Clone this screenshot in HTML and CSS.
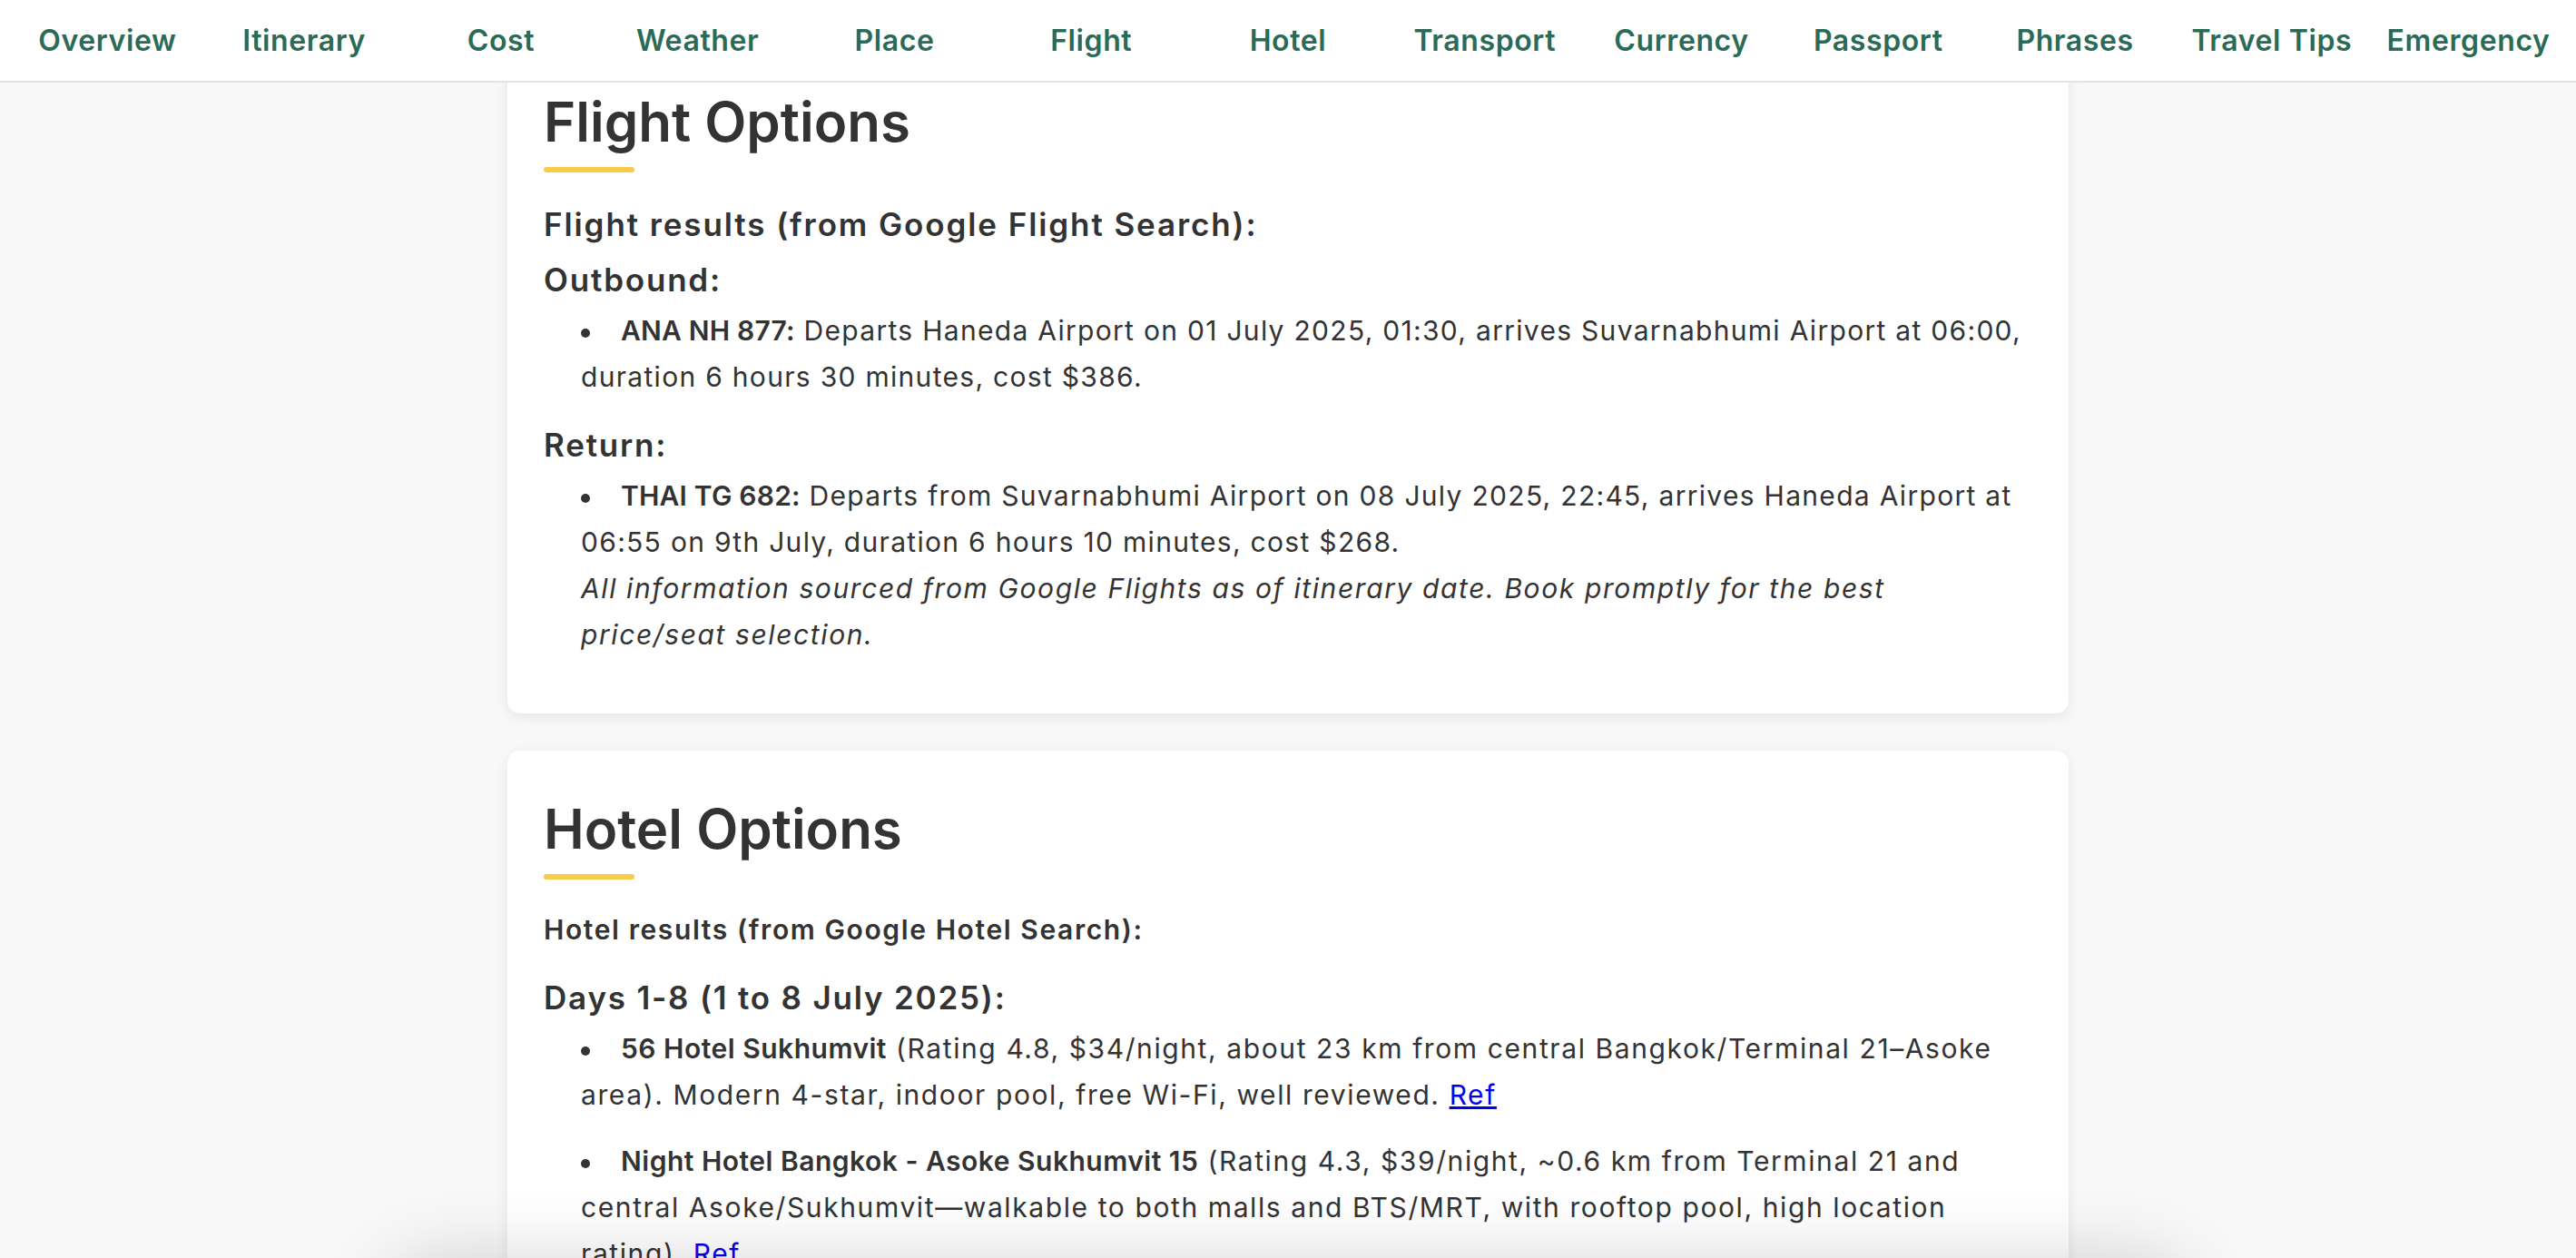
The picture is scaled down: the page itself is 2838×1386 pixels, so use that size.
FILE: index.html
```html
<!DOCTYPE html>
<html lang="en">
<head>
<meta charset="utf-8">
<title>Trip Plan – Flight &amp; Hotel</title>
<link rel="stylesheet" href="styles.css">
</head>
<body>
<nav class="topnav">
  <a class="navlink" href="#overview">Overview</a>
  <a class="navlink" href="#itinerary">Itinerary</a>
  <a class="navlink" href="#cost">Cost</a>
  <a class="navlink" href="#weather">Weather</a>
  <a class="navlink" href="#place">Place</a>
  <a class="navlink" href="#flight">Flight</a>
  <a class="navlink" href="#hotel">Hotel</a>
  <a class="navlink" href="#transport">Transport</a>
  <a class="navlink" href="#currency">Currency</a>
  <a class="navlink" href="#passport">Passport</a>
  <a class="navlink" href="#phrases">Phrases</a>
  <a class="navlink" href="#tips">Travel Tips</a>
  <a class="navlink" href="#emergency">Emergency</a>
</nav>
<main class="content">
  <section class="card" id="flight">
    <h2 class="card-title">Flight Options</h2>
    <p class="lead">Flight results (from Google Flight Search):</p>
    <h3 class="sub">Outbound:</h3>
    <ul class="items">
      <li><strong>ANA NH 877:</strong> Departs Haneda Airport on 01 July 2025, 01:30, arrives Suvarnabhumi Airport at 06:00, duration 6 hours 30 minutes, cost $386.</li>
    </ul>
    <h3 class="sub">Return:</h3>
    <ul class="items">
      <li><strong>THAI TG 682:</strong> Departs from Suvarnabhumi Airport on 08 July 2025, 22:45, arrives Haneda Airport at 06:55 on 9th July, duration 6 hours 10 minutes, cost $268.<br><em>All information sourced from Google Flights as of itinerary date. Book promptly for the best price/seat selection.</em></li>
    </ul>
  </section>
  <section class="card" id="hotel">
    <h2 class="card-title">Hotel Options</h2>
    <p class="source">Hotel results (from Google Hotel Search):</p>
    <h3 class="sub">Days 1-8 (1 to 8 July 2025):</h3>
    <ul class="items items-hotel">
      <li><strong>56 Hotel Sukhumvit</strong> (Rating 4.8, $34/night, about 23 km from central Bangkok/Terminal 21–Asoke area). Modern 4-star, indoor pool, free Wi-Fi, well reviewed. <a href="#ref1">Ref</a></li>
      <li><strong>Night Hotel Bangkok - Asoke Sukhumvit 15</strong> (Rating 4.3, $39/night, ~0.6 km from Terminal 21 and central Asoke/Sukhumvit—walkable to both malls and BTS/MRT, with rooftop pool, high location rating). <a href="#ref2">Ref</a></li>
    </ul>
  </section>
</main>
<div class="dock"></div>
</body>
</html>
```
FILE: styles.css
```css
* { box-sizing: border-box; }

html, body { margin: 0; }

body {
  background: #f8f8f8;
  color: #333;
  font-family: Inter, "Open Sans", sans-serif;
  font-size: 30px;
  line-height: 51px;
  letter-spacing: 1.3px;
  overflow: hidden;
}

.topnav {
  position: fixed;
  top: 0;
  left: 0;
  right: 0;
  height: 91px;
  background: #fff;
  border-bottom: 2px solid #e3e3e3;
  display: flex;
  align-items: center;
  padding: 0 10px;
  z-index: 10;
}

.navlink {
  flex: 1 1 0;
  text-align: center;
  color: #2b6a57;
  font-weight: 600;
  font-size: 32px;
  line-height: 40px;
  letter-spacing: 0.6px;
  text-decoration: none;
}

.content {
  padding-top: 48px;
  display: flex;
  flex-direction: column;
  align-items: center;
  gap: 41px;
}

.card {
  width: 1720px;
  background: #fff;
  border-radius: 14px;
  box-shadow: 0 4px 14px rgba(0, 0, 0, 0.08);
  padding: 40px;
}

.card-title {
  margin: 11px 0 0;
  font-size: 60px;
  line-height: 70px;
  font-weight: 600;
  letter-spacing: 0;
  color: #333;
}

.card-title::after {
  content: "";
  display: block;
  width: 100px;
  height: 6px;
  margin-top: 15px;
  border-radius: 3px;
  background: #f8cb4a;
}

.lead {
  margin: 36px 0 18px;
  font-size: 35px;
  line-height: 43px;
  font-weight: 600;
  letter-spacing: 1.9px;
}

.source {
  margin: 30px 0 28px;
  font-weight: 600;
  letter-spacing: 1.6px;
}

.sub {
  margin: 28px 0 9px;
  font-size: 35px;
  line-height: 43px;
  font-weight: 600;
  letter-spacing: 1.8px;
}

.lead + .sub { margin-top: 18px; }

.items {
  list-style: none;
  margin: 0 0 21px;
  padding: 0 0 0 41px;
}

.items-hotel { letter-spacing: 1.6px; }

.items li + li { margin-top: 22px; }

.items li::before {
  content: "";
  display: inline-block;
  width: 10px;
  height: 10px;
  margin-right: 34px;
  border-radius: 50%;
  background: #333;
  vertical-align: middle;
}

.items strong {
  font-weight: 600;
  letter-spacing: 0.2px;
}

.items-hotel strong { letter-spacing: 0.5px; }

.items em { letter-spacing: 1.6px; }

.items a { color: #0000ee; }

.dock {
  position: fixed;
  left: 50%;
  bottom: -140px;
  width: 2000px;
  height: 140px;
  margin-left: -1000px;
  border-radius: 70px;
  background: #fff;
  box-shadow: 0 0 80px rgba(0, 0, 0, 0.16);
}
```
